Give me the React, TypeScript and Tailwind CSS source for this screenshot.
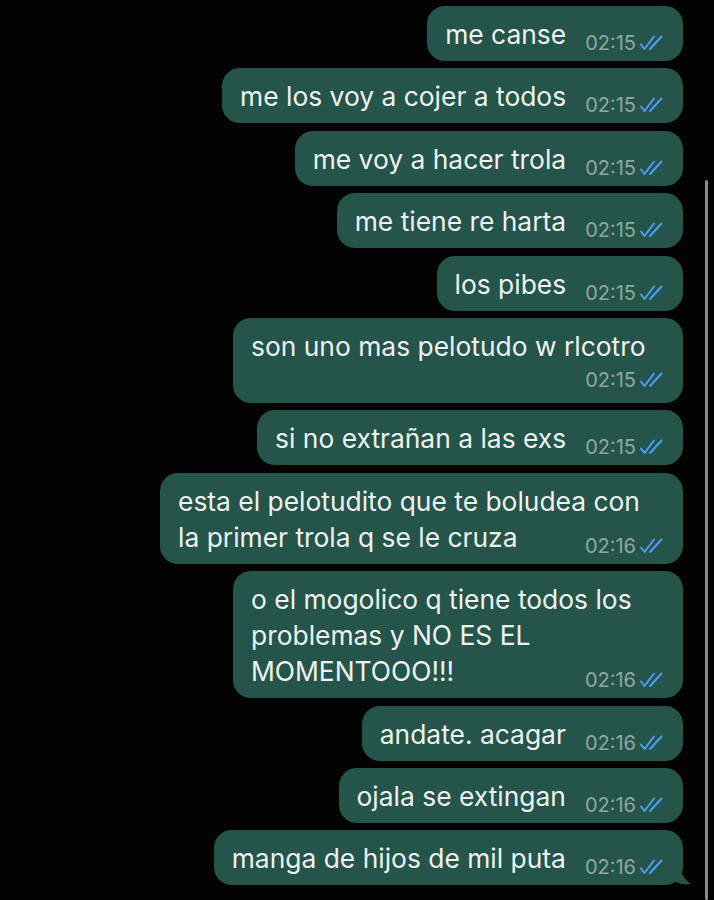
import React from 'react';

type Msg = { lines: string[]; time: string; timeOwnRow?: boolean; tail?: boolean; width?: string };

const messages: Msg[] = [
  { lines: ['me canse'], time: '02:15' },
  { lines: ['me los voy a cojer a todos'], time: '02:15' },
  { lines: ['me voy a hacer trola'], time: '02:15' },
  { lines: ['me tiene re harta'], time: '02:15' },
  { lines: ['los pibes'], time: '02:15' },
  { lines: ['son uno mas pelotudo w rlcotro'], time: '02:15', timeOwnRow: true, width: 'w-[450px]' },
  { lines: ['si no extrañan a las exs'], time: '02:15' },
  { lines: ['esta el pelotudito que te boludea con', 'la primer trola q se le cruza'], time: '02:16', width: 'w-[523px]' },
  { lines: ['o el mogolico q tiene todos los', 'problemas y NO ES EL', 'MOMENTOOO!!!'], time: '02:16', width: 'w-[450px]' },
  { lines: ['andate. acagar'], time: '02:16' },
  { lines: ['ojala se extingan'], time: '02:16' },
  { lines: ['manga de hijos de mil puta'], time: '02:16', tail: true },
];

function Ticks() {
  return (
    <svg width="26" height="18" viewBox="0 0 26 18" fill="none" className="shrink-0">
      <path d="M2 10.5 L5.5 15 L15 2.5" stroke="#4f9cf5" strokeWidth="2" strokeLinecap="round" strokeLinejoin="round" />
      <path d="M11 15 L22.5 2.5" stroke="#4f9cf5" strokeWidth="2" strokeLinecap="round" strokeLinejoin="round" />
    </svg>
  );
}

function Meta({ time }: { time: string }) {
  return (
    <div className="flex items-center gap-[3px] shrink-0 h-[24px]">
      <span className="text-[20px] leading-[24px] text-[#8fa9a0]">{time}</span>
      <Ticks />
    </div>
  );
}

function Bubble({ msg }: { msg: Msg }) {
  const last = msg.lines.length - 1;
  return (
    <div className={`relative ${msg.width ?? ''}`}>
      <div className="rounded-[18px] bg-[#24544a] pl-[18px] pr-[18px] pt-[10px] pb-[9px] text-[#eef2f0]">
        {msg.lines.map((line, i) => (
          <div key={i} className="flex items-end">
            <span className="text-[26.4px] leading-[36px] whitespace-nowrap">{line}</span>
            {i === last && !msg.timeOwnRow && (
              <div className="ml-auto pl-[19px] -mb-[3px]">
                <Meta time={msg.time} />
              </div>
            )}
          </div>
        ))}
        {msg.timeOwnRow && (
          <div className="flex justify-end mt-[4px] mb-[2px]">
            <Meta time={msg.time} />
          </div>
        )}
      </div>
      {msg.tail && (
        <svg className="absolute -right-[12px] bottom-0" width="22" height="26" viewBox="0 0 22 26">
          <path d="M0 0 L6 0 C6 11 10 20 18 25 C10 26.5 3 24 0 20 Z" fill="#24544a" />
        </svg>
      )}
    </div>
  );
}

export default function App() {
  return (
    <div className="relative min-h-[900px] w-[714px] bg-[#030303] overflow-hidden" style={{ fontFamily: 'Inter, "Noto Sans", sans-serif' }}>
      <div className="flex flex-col items-end gap-[7.4px] pt-[6px] pr-[31px]">
        {messages.map((m, i) => (
          <Bubble key={i} msg={m} />
        ))}
      </div>
      <div className="absolute right-[6px] top-[180px] bottom-0 w-[3px] rounded-full bg-[#8a8a8a]" />
    </div>
  );
}
